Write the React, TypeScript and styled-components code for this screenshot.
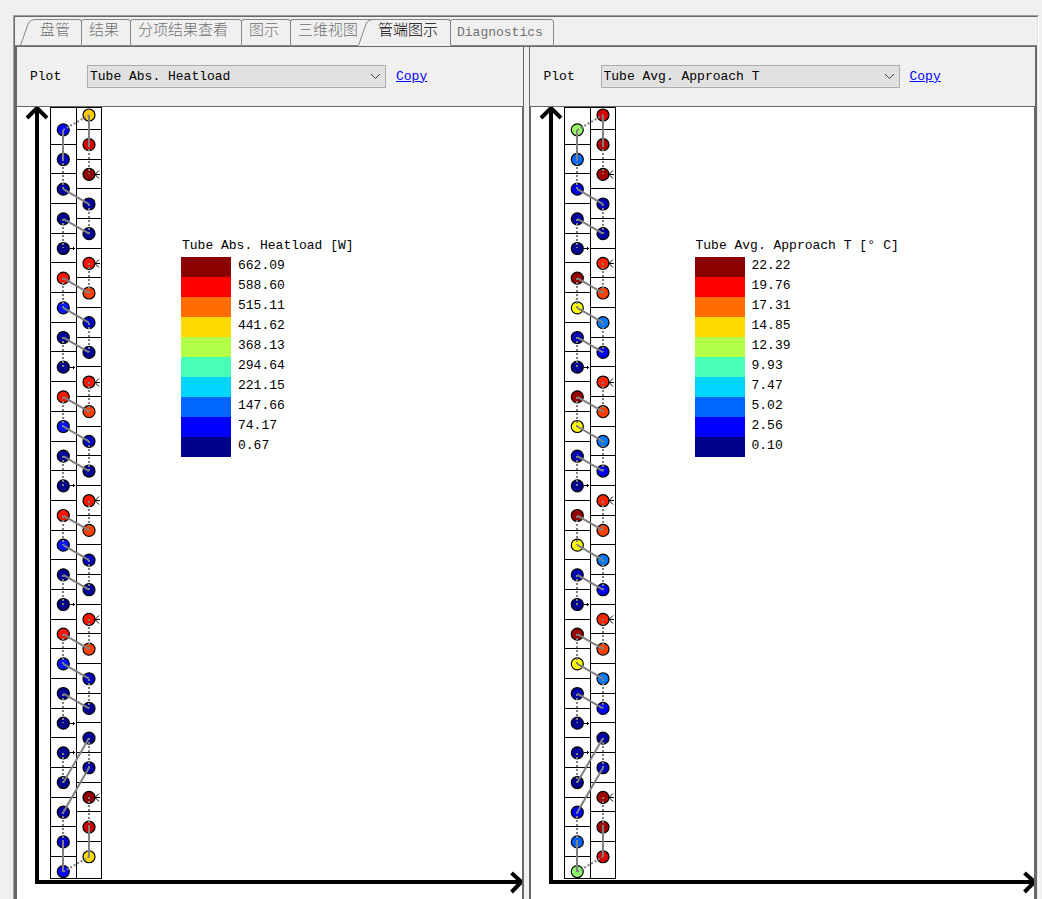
import React, { useState } from "react";
import styled, { createGlobalStyle, css } from "styled-components";

const face = "#f0f0f0";
const dark = "#696969";
const mid = "#a0a0a0";
const tabLine = "#868686";

const GlobalStyle = createGlobalStyle`
  *, *::before, *::after { box-sizing: border-box; }
  body {
    margin: 0;
    background: ${face};
    color: #000;
    font-family: "Liberation Mono", "Noto Sans CJK SC", monospace;
    font-size: 13px;
    line-height: 20px;
  }
`;

const Page = styled.div`
  display: flex;
  flex-direction: column;
  min-height: 100vh;
  padding: 15px 3px 0 13px;
`;

const Frame = styled.div`
  flex: 1;
  display: flex;
  flex-direction: column;
  border-left: 1px solid ${mid};
  border-top: 1px solid ${mid};
  border-right: 1px solid #fff;
`;

const FrameInner = styled.div`
  flex: 1;
  display: flex;
  flex-direction: column;
  border-left: 1px solid ${dark};
  border-top: 1px solid ${dark};
  border-right: 1px solid #e3e3e3;
`;

const TabStrip = styled.nav`
  display: flex;
  padding: 2px 0 0 5px;
  box-shadow: inset 0 -1px ${tabLine};
`;

const Slant = styled.svg`
  flex: none;
  display: block;
`;

const Tab = styled.button<{
  $width: number;
  $active?: boolean;
  $openLeft?: boolean;
  $openRight?: boolean;
  $latin?: boolean;
}>`
  flex: none;
  width: ${(p) => p.$width}px;
  height: 27px;
  margin: 0 0 0 ${(p) => (p.$openLeft ? "0" : "-1px")};
  padding: ${(p) => (p.$latin ? "0" : "0 0 2px")};
  padding-left: ${(p) => (p.$openLeft ? "4px" : p.$latin ? "6px" : "7px")};
  border: 1px solid ${tabLine};
  border-bottom-color: ${(p) => (p.$active ? face : tabLine)};
  border-radius: 3px 3px 0 0;
  background: ${face};
  color: ${(p) => (p.$active ? "#000" : "#707070")};
  font-family: inherit;
  font-size: ${(p) => (p.$latin ? "13px" : "15px")};
  font-weight: ${(p) => (p.$latin ? 400 : 300)};
  line-height: 20px;
  text-align: left;
  white-space: nowrap;
  ${(p) => p.$openLeft && css`border-left: 0; border-top-left-radius: 0;`}
  ${(p) => p.$openRight && css`border-right: 0; border-top-right-radius: 0;`}
`;

const Panel = styled.main`
  flex: 1;
  display: flex;
  border: 2px solid ${dark};
  border-top-width: 1px;
  border-bottom: 0;
`;

const Splitter = styled.div`
  flex: 0 0 5px;
`;

const Pane = styled.section<{ $side: "left" | "right" }>`
  flex: 1 1 0;
  min-width: 0;
  display: flex;
  flex-direction: column;
  border: 0 solid ${dark};
  border-left-width: ${(p) => (p.$side === "right" ? "1px" : "0")};
  border-right-width: ${(p) => (p.$side === "left" ? "1px" : "0")};
`;

const PaneHeader = styled.header<{ $side: "left" | "right" }>`
  display: flex;
  align-items: center;
  height: 59px;
  padding: 0 13px 0 ${(p) => (p.$side === "left" ? "13px" : "14px")};
`;

const PlotLabel = styled.label`
  flex: 0 0 57px;
`;

const SelectBox = styled.div`
  position: relative;
  flex: 0 1 299px;
  min-width: 0;
`;

const PlotSelect = styled.select`
  display: block;
  width: 100%;
  height: 23px;
  padding: 1px 24px 0 2px;
  appearance: none;
  border: 1px solid #adadad;
  border-radius: 0;
  background: #e1e1e1;
  color: #000;
  font: inherit;
`;

const Chevron = styled.svg`
  position: absolute;
  right: 5px;
  top: 8px;
  pointer-events: none;
`;

const CopyLink = styled.a`
  margin-left: 10px;
  color: #0000ff;
  text-decoration: underline;
`;

const Plot = styled.div<{ $side: "left" | "right" }>`
  flex: 1;
  display: grid;
  border: 0 solid ${dark};
  border-top-width: 1px;
  border-right-width: 1px;
  border-left-width: ${(p) => (p.$side === "right" ? "1px" : "0")};
  background: #fff;
`;

const Drawing = styled.svg`
  grid-area: 1 / 1;
  display: block;
  width: 100%;
  height: 790px;
`;

const Legend = styled.figure`
  grid-area: 1 / 1;
  justify-self: start;
  align-self: start;
  margin: 129px 0 0 164px;
`;

const LegendTitle = styled.figcaption`
  height: 21px;
  padding-left: 1px;
  white-space: nowrap;
`;

const Degree = styled.span`
  display: inline-block;
  width: 16px;
`;

const LegendList = styled.ul`
  margin: 0;
  padding: 0;
  list-style: none;
`;

const LegendRow = styled.li`
  display: flex;
  gap: 7px;
  height: 20px;
  line-height: 18px;
`;

const Swatch = styled.span<{ $color: string }>`
  width: 50px;
  height: 20px;
  background: ${(p) => p.$color};
`;

const scale = [
  "#8b0000", "#ff0000", "#ff6c00", "#ffd900", "#b4ff48",
  "#48ffb8", "#00d6ff", "#0066ff", "#0000ff", "#00008b",
];

type Side = "left" | "right";
type TubeRef = [Side, number];
type Link = { from: TubeRef; to: TubeRef; dashed?: boolean };

const ROWS = 26;
const PITCH = 29.67;
const tubeX = { left: 46.3, right: 72 };
const tubeTop = { left: 22.8, right: 8 };
const tubeY = (side: Side, i: number) => tubeTop[side] + PITCH * i;

const circuits = [5, 9, 13, 17];
const inlets = [2, 5, 9, 13, 17, 23];
const outlets = [4, 8, 12, 16, 20, 21];

const links: Link[] = [
  { from: ["left", 0], to: ["right", 0], dashed: true },
  { from: ["right", 0], to: ["right", 1] },
  { from: ["right", 1], to: ["right", 2], dashed: true },
  { from: ["left", 0], to: ["left", 1] },
  { from: ["left", 1], to: ["left", 2], dashed: true },
  { from: ["left", 2], to: ["right", 3] },
  { from: ["right", 3], to: ["right", 4], dashed: true },
  { from: ["left", 3], to: ["right", 4] },
  { from: ["left", 3], to: ["left", 4], dashed: true },
  ...circuits.flatMap((n): Link[] => [
    { from: ["right", n], to: ["right", n + 1], dashed: true },
    { from: ["left", n], to: ["right", n + 1] },
    { from: ["left", n], to: ["left", n + 1], dashed: true },
    { from: ["left", n + 1], to: ["right", n + 2] },
    { from: ["right", n + 2], to: ["right", n + 3], dashed: true },
    { from: ["left", n + 2], to: ["right", n + 3] },
    { from: ["left", n + 2], to: ["left", n + 3], dashed: true },
  ]),
  { from: ["left", 21], to: ["left", 22], dashed: true },
  { from: ["left", 22], to: ["right", 21] },
  { from: ["right", 21], to: ["right", 22], dashed: true },
  { from: ["left", 23], to: ["right", 22] },
  { from: ["left", 23], to: ["left", 24], dashed: true },
  { from: ["left", 24], to: ["left", 25] },
  { from: ["left", 25], to: ["right", 25], dashed: true },
  { from: ["right", 25], to: ["right", 24] },
  { from: ["right", 24], to: ["right", 23], dashed: true },
];

const repeat = (group: string[]) => circuits.flatMap(() => group);

type Colors = Record<Side, string[]>;

const heatColors: Colors = {
  left: [
    "#0000ff", "#0000b8", "#00009c", "#000090", "#000088",
    ...repeat(["#ff1400", "#0014ff", "#000098", "#000088"]),
    "#00008c", "#000090", "#0000a4", "#0000c8", "#0000ff",
  ],
  right: [
    "#ffcc00", "#d40000", "#900000", "#0000a0", "#000098",
    ...repeat(["#ff1400", "#ff4000", "#0000c0", "#000098"]),
    "#000098", "#0000a8", "#900000", "#cc0000", "#ffdc00",
  ],
};

const approachColors: Colors = {
  left: [
    "#98ff68", "#0068ff", "#0000e8", "#0000a0", "#000090",
    ...repeat(["#980000", "#ffff00", "#0000b0", "#000090"]),
    "#000098", "#000090", "#0000f0", "#0060ff", "#90ff70",
  ],
  right: [
    "#d80000", "#b00000", "#a00000", "#0000b0", "#0000a0",
    ...repeat(["#ff2400", "#ff4000", "#0078ff", "#0000f4"]),
    "#0000a0", "#0000b8", "#a00000", "#a00000", "#d80000",
  ],
};

function TubeSheet({ colors, label }: { colors: Colors; label: string }) {
  const sides: Side[] = ["left", "right"];
  return (
    <Drawing role="img" aria-label={label}>
      {/* axes with arrow heads */}
      <g stroke="#000" strokeWidth="4" fill="none">
        <line x1="20" y1="1" x2="20" y2="777" />
        <path d="M10 11 L20 1 L30 11" />
        <line x1="18" y1="775" x2="100%" y2="775" />
        <svg x="100%" y="0" overflow="visible">
          <path d="M-10 766 L0 775 L-10 785" />
        </svg>
      </g>

      {/* coil cells */}
      <g stroke="#000" strokeWidth="1" fill="none" shapeRendering="crispEdges">
        <rect x="33.5" y="0.5" width="51" height="771" />
        <line x1="59.5" y1="0" x2="59.5" y2="771" />
        {Array.from({ length: ROWS - 1 }, (_, i) => {
          const l = Math.floor(37.3 + PITCH * i) + 0.5;
          const r = Math.floor(22.4 + PITCH * i) + 0.5;
          return (
            <React.Fragment key={i}>
              <line x1="33" y1={l} x2="60" y2={l} />
              <line x1="59" y1={r} x2="85" y2={r} />
            </React.Fragment>
          );
        })}
      </g>

      {sides.map((side) =>
        colors[side].map((fill, i) => (
          <circle
            key={side + i}
            cx={tubeX[side]}
            cy={tubeY(side, i)}
            r="6"
            fill={fill}
            stroke="#000"
            strokeWidth="1.2"
          />
        ))
      )}

      <g stroke="#808080" strokeWidth="2">
        {links.map(({ from, to, dashed }, i) => (
          <line
            key={i}
            x1={tubeX[from[0]]}
            y1={tubeY(...from)}
            x2={tubeX[to[0]]}
            y2={tubeY(...to)}
            strokeDasharray={dashed ? "2 2" : undefined}
            shapeRendering={from[0] === to[0] ? "crispEdges" : undefined}
          />
        ))}
      </g>

      <g stroke="#000" strokeWidth="1" fill="none">
        {inlets.map((n) => {
          const y = Math.floor(tubeY("right", n)) + 0.5;
          return <path key={n} d={`M78 ${y} H83 M82 ${y - 4} L78 ${y} L82 ${y + 4}`} />;
        })}
        {outlets.map((n) => {
          const y = Math.floor(tubeY("left", n)) + 0.5;
          return <path key={n} d={`M53 ${y} H58 M56.5 ${y - 1.5} V${y + 1.5}`} />;
        })}
      </g>
    </Drawing>
  );
}

type PlotPaneProps = {
  side: Side;
  id: string;
  option: string;
  title: React.ReactNode;
  values: string[];
  colors: Colors;
};

function PlotPane({ side, id, option, title, values, colors }: PlotPaneProps) {
  return (
    <Pane $side={side}>
      <PaneHeader $side={side}>
        <PlotLabel htmlFor={id}>Plot</PlotLabel>
        <SelectBox>
          <PlotSelect id={id} defaultValue={option}>
            <option>{option}</option>
          </PlotSelect>
          <Chevron width="11" height="7" viewBox="0 0 11 7" aria-hidden="true">
            <path d="M1 1 L5.5 5.5 L10 1" fill="none" stroke="#404040" />
          </Chevron>
        </SelectBox>
        <CopyLink href="#copy">Copy</CopyLink>
      </PaneHeader>
      <Plot $side={side}>
        <TubeSheet colors={colors} label={option} />
        <Legend>
          <LegendTitle>{title}</LegendTitle>
          <LegendList>
            {values.map((v, i) => (
              <LegendRow key={v}>
                <Swatch $color={scale[i]} />
                {v}
              </LegendRow>
            ))}
          </LegendList>
        </Legend>
      </Plot>
    </Pane>
  );
}

function TabSlant({ raised, joined }: { raised: boolean; joined?: boolean }) {
  return (
    <Slant width="16" height="27" viewBox="0 0 16 27" aria-hidden="true">
      {/* top edge of the neighbouring tab running into the slant */}
      {joined && <path d="M0 0.5 H16" stroke={tabLine} />}
      <path d={`M0 26 L8 5 Q10 0.5 16 0.5 V${raised ? 27 : 26} H0 Z`} fill={face} />
      <path d="M0.5 26.5 L8 5 Q10 0.5 16 0.5" fill="none" stroke={tabLine} />
    </Slant>
  );
}

export default function App() {
  const [active, setActive] = useState("管端图示");
  const tab = (name: string) => ({
    type: "button" as const,
    $active: active === name,
    "aria-current": active === name ? ("page" as const) : undefined,
    onClick: () => setActive(name),
  });
  return (
    <>
      <GlobalStyle />
      <Page>
        <Frame>
          <FrameInner>
            <TabStrip>
              <TabSlant raised={active === "盘管"} />
              <Tab {...tab("盘管")} $width={46} $openLeft>盘管</Tab>
              <Tab {...tab("结果")} $width={50}>结果</Tab>
              <Tab {...tab("分项结果查看")} $width={112}>分项结果查看</Tab>
              <Tab {...tab("图示")} $width={50}>图示</Tab>
              <Tab {...tab("三维视图")} $width={68} $openRight>三维视图</Tab>
              <TabSlant raised={active === "管端图示"} joined />
              <Tab {...tab("管端图示")} $width={77} $openLeft>管端图示</Tab>
              <Tab {...tab("Diagnostics")} $width={104} $latin>Diagnostics</Tab>
            </TabStrip>
            <Panel>
              <PlotPane
                side="left"
                id="plot-heatload"
                option="Tube Abs. Heatload"
                title="Tube Abs. Heatload [W]"
                values={["662.09", "588.60", "515.11", "441.62", "368.13", "294.64", "221.15", "147.66", "74.17", "0.67"]}
                colors={heatColors}
              />
              <Splitter />
              <PlotPane
                side="right"
                id="plot-approach"
                option="Tube Avg. Approach T"
                title={<>Tube Avg. Approach T [<Degree>°</Degree>C]</>}
                values={["22.22", "19.76", "17.31", "14.85", "12.39", "9.93", "7.47", "5.02", "2.56", "0.10"]}
                colors={approachColors}
              />
            </Panel>
          </FrameInner>
        </Frame>
      </Page>
    </>
  );
}
